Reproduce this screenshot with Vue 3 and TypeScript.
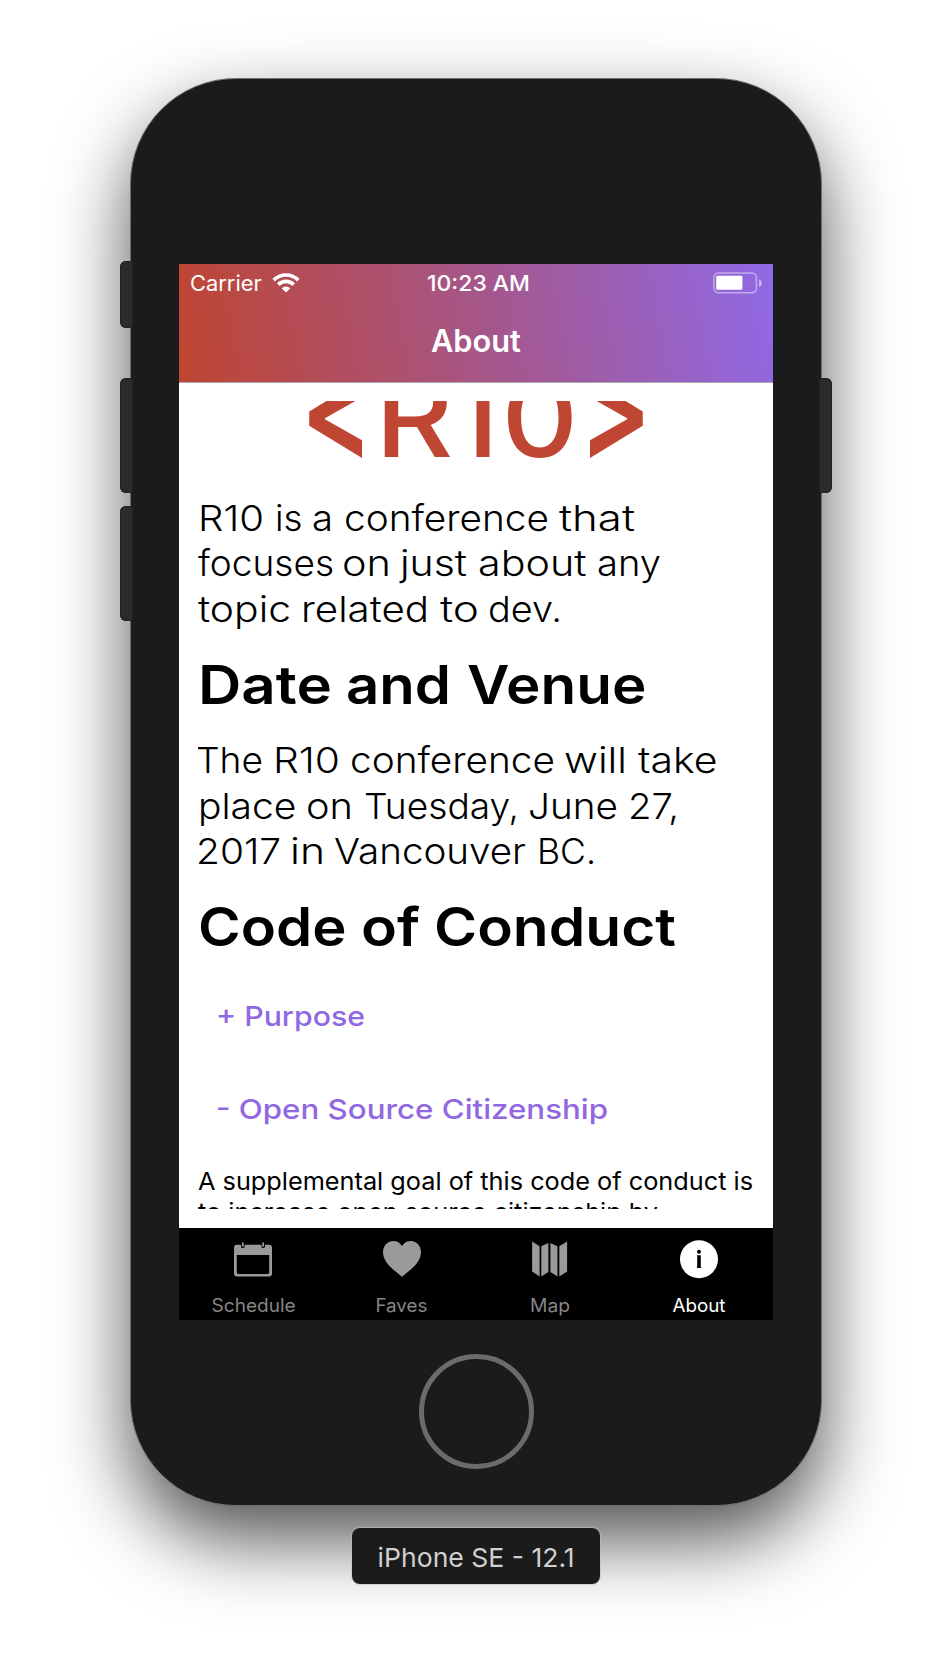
<script setup lang="ts">
import { nextTick, onMounted, ref } from 'vue'

interface Line {
  text: string
  width: number
}

// [word, ink start, ink end] measured from the stage's left edge
type Word = [string, number, number]

interface Tab {
  id: 'schedule' | 'faves' | 'map' | 'about'
  label: string
  width: number
  active: boolean
}

const COLUMN_LEFT = 198
const BEARING = 2

const intro: Word[][] = [
  [['R10', 200, 262], ['is', 277, 300.5], ['a', 314, 331], ['conference', 346, 547], ['that', 561, 633]],
  [['focuses', 200, 332], ['on', 344, 389], ['just', 402, 465], ['about', 479.5, 584], ['any', 599, 659]],
  [['topic', 200, 289], ['related', 303, 427], ['to', 442, 477], ['dev.', 490, 560]],
]

const venue: Word[][] = [
  [['The', 198, 261], ['R10', 275, 338], ['conference', 352, 553], ['will', 566, 625], ['take', 640, 715.5]],
  [['place', 199.5, 294], ['on', 308, 351], ['Tuesday,', 366, 517], ['June', 530, 616], ['27,', 630, 677]],
  [['2017', 198, 279], ['in', 292, 323], ['Vancouver', 336, 524], ['BC.', 539, 594]],
]

const venueHeading: Word[] = [['Date', 200, 330], ['and', 348, 449], ['Venue', 469, 644.5]]
const conductHeading: Word[] = [['Code', 199.5, 344], ['of', 363, 418], ['Conduct', 435.5, 673.5]]

const citizenship: Line[] = [
  { text: 'A supplemental goal of this code of conduct is', width: 555 },
  { text: 'to increase open source citizenship by', width: 460 },
]

const tabs: Tab[] = [
  { id: 'schedule', label: 'Schedule', width: 84, active: false },
  { id: 'faves', label: 'Faves', width: 52, active: false },
  { id: 'map', label: 'Map', width: 40, active: false },
  { id: 'about', label: 'About', width: 53, active: true },
]

const root = ref<HTMLElement | null>(null)

function cell(words: Word[], i: number) {
  const [, start, end] = words[i]
  const from = i === 0 ? COLUMN_LEFT - BEARING : words[i - 1][2]
  return {
    marginLeft: `${start - from - 2 * BEARING}px`,
    width: `${end - start + 2 * BEARING}px`,
  }
}

function wordWidth(word: Word) {
  return word[2] - word[1] + 2 * BEARING
}

// Stretches a single-line label horizontally to its design width.
function fit(el: HTMLElement, width: number) {
  el.style.transform = 'none'
  const natural = el.getBoundingClientRect().width
  if (natural > 0) el.style.transform = `scaleX(${width / natural})`
}

const vFit = {
  mounted: (el: HTMLElement, binding: { value: number }) => {
    el.dataset.fit = String(binding.value)
  },
}

function fitAll() {
  root.value?.querySelectorAll<HTMLElement>('[data-fit]').forEach((el) => fit(el, Number(el.dataset.fit)))
}

onMounted(async () => {
  await nextTick()
  fitAll()
  document.fonts?.ready.then(fitAll)
})
</script>

<template>
  <div ref="root" class="stage">
    <div class="phone">
      <i class="key key-mute"></i>
      <i class="key key-up"></i>
      <i class="key key-down"></i>
      <i class="key key-power"></i>

      <div class="screen">
        <header class="header">
          <div class="status">
            <div class="status-left">
              <span v-fit="74" class="carrier fit">Carrier</span>
              <svg class="wifi" width="28" height="20" viewBox="0 0 28 20">
                <g fill="none" stroke="#fff" stroke-width="3.7">
                  <path d="M1.7 7.1A17.4 17.4 0 0 1 26.3 7.1" />
                  <path d="M6.3 11.6A11 11 0 0 1 21.7 11.6" />
                </g>
                <path d="M9.7 15.2A6.2 6.2 0 0 1 18.3 15.2L14 19.6Z" fill="#fff" />
              </svg>
            </div>
            <span class="time"><span v-fit="103" class="fit-center">10:23 AM</span></span>
            <svg class="battery" width="50" height="22" viewBox="0 0 50 22">
              <rect x="0.9" y="0.9" width="42.6" height="19.8" rx="4.6" fill="none" stroke="#fff" stroke-opacity="0.45" stroke-width="1.5" />
              <rect x="3.2" y="3.8" width="26.2" height="14" rx="1.4" fill="#fff" />
              <path d="M46 7.2C49.8 8.6 49.8 13.6 46 15Z" fill="#fff" fill-opacity="0.5" />
            </svg>
          </div>
          <h1 class="title"><span v-fit="90" class="fit-center">About</span></h1>
        </header>

        <main class="content">
          <div class="viewport">
            <svg class="logo" width="340" height="60" viewBox="306 401.3 340 60">
              <defs>
                <clipPath id="stem">
                  <rect x="475.5" y="395" width="14" height="70" />
                </clipPath>
              </defs>
              <g fill="#bf4632">
                <text transform="translate(299.3 460.5) scale(0.99 1.3)" class="logo-text bracket">&lt;</text>
                <text transform="translate(374 457) scale(1.1 1)" class="logo-text">R</text>
                <g clip-path="url(#stem)">
                  <text transform="translate(450 457)" class="logo-text bracket">1</text>
                </g>
                <text transform="translate(500.6 457) scale(1.08 1)" class="logo-text">0</text>
                <text transform="translate(577.6 460.5) scale(0.99 1.3)" class="logo-text bracket">&gt;</text>
              </g>
            </svg>

            <p class="copy intro">
              <span v-for="(words, n) in intro" :key="n" class="line">
                <span v-for="(w, i) in words" :key="i" class="word" :style="cell(words, i)"><span v-fit="wordWidth(w)" class="fit">{{ w[0] }}</span></span>
              </span>
            </p>
            <h2 class="heading">
              <span v-for="(w, i) in venueHeading" :key="i" class="word" :style="cell(venueHeading, i)"><span v-fit="wordWidth(w)" class="fit">{{ w[0] }}</span></span>
            </h2>
            <p class="copy">
              <span v-for="(words, n) in venue" :key="n" class="line">
                <span v-for="(w, i) in words" :key="i" class="word" :style="cell(words, i)"><span v-fit="wordWidth(w)" class="fit">{{ w[0] }}</span></span>
              </span>
            </p>
            <h2 class="heading">
              <span v-for="(w, i) in conductHeading" :key="i" class="word" :style="cell(conductHeading, i)"><span v-fit="wordWidth(w)" class="fit">{{ w[0] }}</span></span>
            </h2>

            <div class="toggle purpose"><span v-fit="149" class="fit">+ Purpose</span></div>
            <div class="toggle citizen"><span v-fit="392" class="fit">- Open Source Citizenship</span></div>
            <p class="detail">
              <span v-for="l in citizenship" :key="l.text" class="line"><span v-fit="l.width" class="fit">{{ l.text }}</span></span>
            </p>
          </div>
        </main>

        <nav class="tabs">
          <div v-for="t in tabs" :key="t.id" class="tab" :class="{ active: t.active }">
            <svg class="icon" width="40" height="40" viewBox="0 0 40 40" fill="currentColor">
              <template v-if="t.id === 'schedule'">
                <path fill-rule="evenodd" d="M4 4.8H8V6.4a1.8 1.8 0 0 0 3.6 0V4.8H28.4V6.4a1.8 1.8 0 0 0 3.6 0V4.8H36a3 3 0 0 1 3 3V33.6a3 3 0 0 1-3 3H4a3 3 0 0 1-3-3V7.8a3 3 0 0 1 3-3ZM3.8 15V32.6a1.3 1.3 0 0 0 1.3 1.3H34.9a1.3 1.3 0 0 0 1.3-1.3V15Z" />
                <rect x="9" y="2.2" width="1.7" height="4.6" rx="0.85" />
                <rect x="29.3" y="2.2" width="1.7" height="4.6" rx="0.85" />
              </template>
              <path v-else-if="t.id === 'faves'" d="M20 37C16 32.3 1 24.6 1 12.2C1 6 5.4 1 11.1 1C15.2 1 18.3 3 20 5.9C21.7 3 24.8 1 28.9 1C34.6 1 39 6 39 12.2C39 24.6 24 32.3 20 37Z" />
              <template v-else-if="t.id === 'map'">
                <path d="M2.1 1.6L9.6 6.3V36.4L2.1 31.5Z" />
                <path d="M11.3 6.3L18.4 3V32L11.3 36.4Z" />
                <path d="M20.4 3L27.5 6.3V36.4L20.4 32Z" />
                <path d="M29.3 6.3L37.1 1.6V31.5L29.3 36.4Z" />
              </template>
              <template v-else>
                <circle cx="20" cy="19.2" r="19" />
                <g fill="#000">
                  <circle cx="20" cy="11.8" r="2" />
                  <path d="M17.9 15.2H21.8V27H22.2V28H17.9V27H18.2V16.2H17.9Z" />
                </g>
              </template>
            </svg>
            <span v-fit="t.width" class="tab-label fit-center">{{ t.label }}</span>
          </div>
        </nav>
      </div>

      <div class="home"></div>
    </div>

    <div class="device"><span v-fit="197" class="fit-center">iPhone SE - 12.1</span></div>
  </div>
</template>

<style>
body {
  margin: 0;
  background: #fff;
}
</style>

<style scoped>
.stage {
  box-sizing: border-box;
  width: 952px;
  height: 1656px;
  padding-top: 78px;
  display: flex;
  flex-direction: column;
  align-items: center;
  overflow: hidden;
  background: #fff;
  font-family: Inter, Roboto, "Liberation Sans", sans-serif;
}

.phone {
  position: relative;
  box-sizing: border-box;
  flex: none;
  width: 692px;
  height: 1428px;
  padding-top: 185px;
  border: 1px solid #6f6f6f;
  border-radius: 106px;
  background: #1b1b1b;
  box-shadow: 0 34px 76px rgba(0, 0, 0, 0.68);
  display: flex;
  flex-direction: column;
  align-items: center;
}

.key {
  position: absolute;
  left: -11px;
  width: 13px;
  background: #2b2b2b;
  border-radius: 6px 2px 2px 6px;
  box-shadow: inset 0 0 0 1px #222;
}

.key-mute {
  top: 182px;
  height: 67px;
}

.key-up {
  top: 299px;
  height: 115px;
}

.key-down {
  top: 427px;
  height: 115px;
}

.key-power {
  top: 299px;
  left: auto;
  right: -11px;
  height: 115px;
  border-radius: 2px 6px 6px 2px;
}

.screen {
  flex: none;
  width: 594px;
  height: 1056px;
  display: flex;
  flex-direction: column;
  background: #fff;
  overflow: hidden;
}

.header {
  box-sizing: border-box;
  flex: none;
  height: 119px;
  border-bottom: 1px solid #a9a9ac;
  background: linear-gradient(78.8deg, #bf4530 0%, #a65687 50%, #9069e6 100%);
  background-clip: padding-box;
  color: #fff;
}

.status {
  display: grid;
  grid-template-columns: 237px 104px 1fr;
  align-items: center;
  height: 38px;
  padding: 0 10px 0 11px;
  font-size: 21.6px;
  line-height: 38px;
}

.status-left {
  display: flex;
  align-items: center;
}

.carrier {
  width: 73px;
}

.wifi {
  margin-left: 9px;
}

.time {
  width: 100%;
  font-weight: 500;
  display: flex;
  justify-content: center;
}

.battery {
  justify-self: end;
  display: block;
}

.title {
  margin: 0;
  height: 80px;
  line-height: 78px;
  font-size: 30.7px;
  font-weight: 600;
  display: flex;
  justify-content: center;
}

.fit {
  display: inline-block;
  white-space: nowrap;
  transform-origin: 0 50%;
}

.fit-center {
  display: inline-block;
  white-space: nowrap;
  transform-origin: 50% 50%;
}

.content {
  box-sizing: border-box;
  flex: none;
  height: 845px;
  padding: 18px 18px 18px 19px;
  background: #fff;
}

.viewport {
  height: 808px;
  overflow: hidden;
  color: #000;
}

.logo {
  display: block;
  margin: 0 auto;
  width: 340px;
  height: 60px;
}

.logo-text {
  font-family: Inter, sans-serif;
  font-size: 110px;
  font-weight: 500;
}

.bracket {
  font-weight: 600;
}

.copy {
  margin: 0;
  font-size: 35.8px;
  font-weight: 350;
  line-height: 45.4px;
}

.intro {
  margin-top: 35px;
}

.line {
  display: block;
  height: 1lh;
}

.copy .line,
.heading {
  display: flex;
}

.word {
  flex: none;
  white-space: nowrap;
}

.heading {
  margin: 19px 0 19px;
  height: 68px;
  line-height: 68px;
  font-size: 53px;
  font-weight: 560;
}

.toggle {
  height: 56px;
  margin-left: 18px;
  line-height: 56px;
  font-size: 27.6px;
  font-weight: 500;
  color: #9168e2;
}

.purpose {
  margin-top: 27px;
}

.citizen {
  margin-top: 37px;
}

.detail {
  margin: 29px 0 0;
  font-size: 24.8px;
  line-height: 31px;
}

.tabs {
  flex: none;
  display: flex;
  height: 92px;
  background: #000;
}

.tab {
  flex: 1;
  display: flex;
  flex-direction: column;
  align-items: center;
  padding-top: 12px;
  color: #9a9a9a;
}

.tab.active {
  color: #fff;
}

.icon {
  display: block;
  flex: none;
}

.tab-label {
  margin-top: 13px;
  font-size: 18.4px;
  line-height: 24px;
}

.tab:not(.active) .tab-label {
  color: #858585;
}

.home {
  box-sizing: border-box;
  flex: none;
  width: 115px;
  height: 115px;
  margin-top: 34px;
  border: 5px solid #6b6b6b;
  border-radius: 50%;
}

.device {
  position: relative;
  flex: none;
  width: 248px;
  height: 56px;
  margin-top: 22px;
  border-radius: 8px;
  background: #1b1b1b;
  box-shadow: 0 0 0 1px rgba(190, 190, 190, 0.6);
  color: #d0d0d0;
  font-size: 26.2px;
  line-height: 59px;
  display: flex;
  justify-content: center;
}
</style>
